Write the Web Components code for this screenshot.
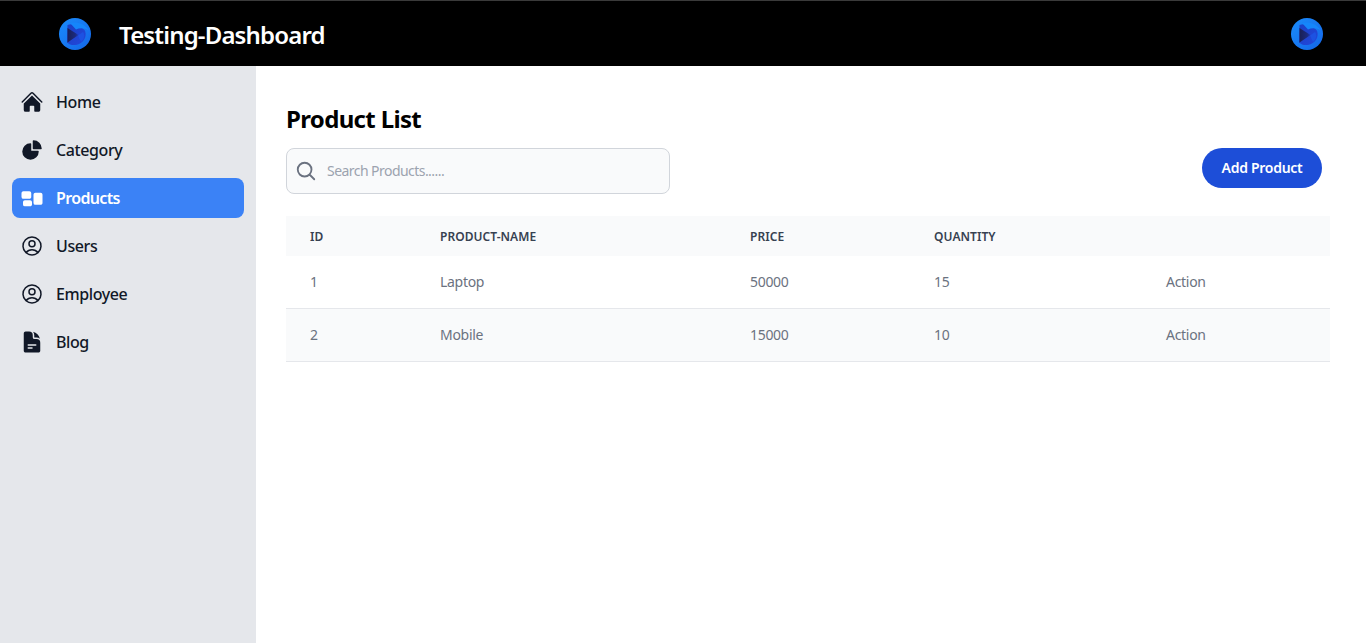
<!DOCTYPE html>
<html lang="en"><head><meta charset="utf-8"><title>Testing-Dashboard</title>
<style>
html,body{margin:0;height:100%;}
body{font-family:"Noto Sans","Open Sans","Liberation Sans",sans-serif;background:#fff;overflow:hidden;}
</style></head>
<body>
<dash-app>
  <app-header slot="header" title-text="Testing-Dashboard"></app-header>
  <side-nav slot="nav">
    <nav-item icon="home">Home</nav-item>
    <nav-item icon="pie">Category</nav-item>
    <nav-item icon="group" active>Products</nav-item>
    <nav-item icon="user">Users</nav-item>
    <nav-item icon="user">Employee</nav-item>
    <nav-item icon="doc">Blog</nav-item>
  </side-nav>
  <product-list></product-list>
</dash-app>
<script>
const LOGO_GRAD_IDS={n:0};
function logo(){
  const i=++LOGO_GRAD_IDS.n;
  return `<svg width="32" height="32" viewBox="0 0 32 32" aria-hidden="true">
  <defs>
   <linearGradient id="a${i}" x1="0" y1="0" x2="1" y2="1"><stop offset="0" stop-color="#1a8cfb"/><stop offset="1" stop-color="#1466e8"/></linearGradient>
   <linearGradient id="b${i}" x1="0" y1="0" x2="1" y2="1"><stop offset="0" stop-color="#1a3fc4"/><stop offset="1" stop-color="#2348dc"/></linearGradient>
   <linearGradient id="c${i}" x1="0" y1="0" x2="1" y2="0"><stop offset="0" stop-color="#1a2054"/><stop offset=".7" stop-color="#1c2a7c"/><stop offset="1" stop-color="#1e3cb8"/></linearGradient>
  </defs>
  <circle cx="16" cy="16" r="16" fill="url(#a${i})"/>
  <path d="M8.5 7C13 5.5 20 6.5 25.5 12 28 16 26.5 22.5 21 25.5 16.5 28 11 27.5 8 24.5Z" fill="url(#b${i})"/>
  <path d="M11 5C18 3 26 6 30 12.5 26 10 21 9.5 17 11.5Z" fill="#1586fb"/>
  <path d="M22 24C25.5 21 26 16.5 24 14L19 17.5Z" fill="#1d52e2"/>
  <path d="M8.5 10 19.5 17 8.5 24.5Z" fill="url(#c${i})"/>
  </svg>`;
}
const ICONS={
 home:`<svg viewBox="0 0 24 24" fill="currentColor"><path d="M11.47 3.841a.75.75 0 0 1 1.06 0l8.69 8.69a.75.75 0 1 0 1.06-1.061l-8.689-8.69a2.25 2.25 0 0 0-3.182 0l-8.69 8.69a.75.75 0 1 0 1.061 1.06l8.69-8.689Z"/><path d="m12 5.432 8.159 8.159c.03.03.06.058.091.086v6.198c0 1.035-.84 1.875-1.875 1.875H15a.75.75 0 0 1-.75-.75v-4.5a.75.75 0 0 0-.75-.75h-3a.75.75 0 0 0-.75.75V21a.75.75 0 0 1-.75.75H5.625a1.875 1.875 0 0 1-1.875-1.875v-6.198a2.29 2.29 0 0 0 .091-.086L12 5.432Z"/></svg>`,
 pie:`<svg viewBox="0 0 24 24" fill="currentColor"><path fill-rule="evenodd" d="M2.25 13.5a8.25 8.25 0 0 1 8.25-8.25.75.75 0 0 1 .75.75v6.75H18a.75.75 0 0 1 .75.75 8.25 8.25 0 0 1-16.5 0Z"/><path fill-rule="evenodd" d="M12.75 3a.75.75 0 0 1 .75-.75 8.25 8.25 0 0 1 8.25 8.25.75.75 0 0 1-.75.75h-7.5a.75.75 0 0 1-.75-.75V3Z"/></svg>`,
 group:`<svg viewBox="0 0 24 24" fill="currentColor"><path d="M1.5 7.125c0-1.036.84-1.875 1.875-1.875h6c1.036 0 1.875.84 1.875 1.875v3.75c0 1.036-.84 1.875-1.875 1.875h-6A1.875 1.875 0 0 1 1.5 10.875v-3.75Zm12 1.5c0-1.036.84-1.875 1.875-1.875h5.25c1.035 0 1.875.84 1.875 1.875v8.25c0 1.035-.84 1.875-1.875 1.875h-5.25a1.875 1.875 0 0 1-1.875-1.875v-8.25ZM3 16.125c0-1.036.84-1.875 1.875-1.875h5.25c1.036 0 1.875.84 1.875 1.875v2.25c0 1.035-.84 1.875-1.875 1.875h-5.25A1.875 1.875 0 0 1 3 18.375v-2.25Z"/></svg>`,
 user:`<svg viewBox="0 0 24 24" fill="none" stroke="currentColor" stroke-width="1.5" stroke-linecap="round" stroke-linejoin="round"><path d="M17.982 18.725A7.488 7.488 0 0 0 12 15.75a7.488 7.488 0 0 0-5.982 2.975m11.963 0a9 9 0 1 0-11.963 0m11.963 0A8.966 8.966 0 0 1 12 21a8.966 8.966 0 0 1-5.982-2.275M15 9.75a3 3 0 1 1-6 0 3 3 0 0 1 6 0Z"/></svg>`,
 doc:`<svg viewBox="0 0 24 24" fill="currentColor"><path fill-rule="evenodd" d="M5.625 1.5c-1.036 0-1.875.84-1.875 1.875v17.25c0 1.035.84 1.875 1.875 1.875h12.75c1.035 0 1.875-.84 1.875-1.875V12.75A3.75 3.75 0 0 0 16.5 9h-1.875a1.875 1.875 0 0 1-1.875-1.875V5.25A3.75 3.75 0 0 0 9 1.5H5.625ZM7.5 15a.75.75 0 0 1 .75-.75h7.5a.75.75 0 0 1 0 1.5h-7.5A.75.75 0 0 1 7.5 15Zm.75 2.25a.75.75 0 0 0 0 1.5H12a.75.75 0 0 0 0-1.5H8.25Z"/><path d="M12.971 1.816A5.23 5.23 0 0 1 14.25 5.25v1.875c0 .207.168.375.375.375H16.5a5.23 5.23 0 0 1 3.434 1.279 9.768 9.768 0 0 0-6.963-6.963Z"/></svg>`
};
function def(name,html,extra){
  const t=document.createElement('template');t.innerHTML=html;
  customElements.define(name,class extends HTMLElement{
    constructor(){super();this.attachShadow({mode:'open'}).appendChild(t.content.cloneNode(true));}
    connectedCallback(){extra&&extra.call(this);}
  });
}
def('dash-app',`<style>
:host{display:grid;grid-template-columns:256px 1fr;grid-template-rows:66px 1fr;height:100vh;width:100%}
::slotted([slot=header]){grid-column:1/3}
</style><slot name="header"></slot><slot name="nav"></slot><slot></slot>`);
def('app-header',`<style>
:host{display:flex;align-items:center;justify-content:space-between;box-sizing:border-box;background:#000;border-top:1px solid #3a3a3a;padding:0 43px 0 59px;height:66px;color:#fff}
.l{display:flex;align-items:center;gap:28px}
.t{font-size:24px;font-weight:600;letter-spacing:-.84px;line-height:32px;padding-top:2px}
svg{display:block}
</style><div class="l"><span class="lg"></span><span class="t"></span></div><span class="lg"></span>`,function(){
  this.shadowRoot.querySelectorAll('.lg').forEach(e=>e.innerHTML=logo());
  this.shadowRoot.querySelector('.t').textContent=this.getAttribute('title-text');
});
def('side-nav',`<style>
:host{display:flex;flex-direction:column;gap:8px;background:#e5e7eb;padding:16px 12px;box-sizing:border-box}
</style><slot></slot>`);
def('nav-item',`<style>
:host{display:flex;align-items:center;gap:12px;height:40px;padding:0 8px;border-radius:8px;color:#111827;font-size:16px;font-weight:500;letter-spacing:-.4px;box-sizing:border-box}
:host([active]){background:#3b82f6;color:#fff;font-weight:600;letter-spacing:-.65px}
.i{width:24px;height:24px;flex:none}
svg{display:block;width:24px;height:24px}
</style><span class="i"></span><span><slot></slot></span>`,function(){
  this.shadowRoot.querySelector('.i').innerHTML=ICONS[this.getAttribute('icon')];
});
def('product-row',`<style>
:host{display:grid;grid-template-columns:130px 310px 184px 232px 188px;align-items:center;height:53px;box-sizing:border-box;border-bottom:1px solid #e5e7eb;font-size:14px;color:#6b7280;letter-spacing:-.3px}
:host([alt]){background:#f9fafb}
:host([head]){height:40px;border:0;background:#f9fafb;font-size:12px;font-weight:600;color:#374151;text-transform:uppercase;letter-spacing:.05px}
::slotted(*){padding-left:24px}
:host(:not([head])) ::slotted(*){padding-bottom:2px}
</style><slot></slot>`);
def('search-box',`<style>
:host{display:flex;align-items:center;gap:10px;width:384px;height:46px;box-sizing:border-box;background:#f9fafb;border:1px solid #d1d5db;border-radius:8px;padding:0 8px}
svg{width:22px;height:22px;flex:none;color:#6b7280}
input{all:unset;flex:1;font:14px "Noto Sans","Open Sans",sans-serif;letter-spacing:-.55px;color:#111827;padding-bottom:2px}
input::placeholder{color:#9ca3af;opacity:1}
</style><svg viewBox="0 0 24 24" fill="none" stroke="currentColor" stroke-width="2" stroke-linecap="round" stroke-linejoin="round"><path d="m21 21-5.197-5.197m0 0A7.5 7.5 0 1 0 5.196 5.196a7.5 7.5 0 0 0 10.607 10.607Z"/></svg><input placeholder="Search Products......" aria-label="Search Products">`);
def('add-button',`<style>
:host{display:inline-flex;align-items:center;justify-content:center;box-sizing:border-box;padding-bottom:2px;width:120px;height:40px;background:#1d4ed8;color:#fff;border-radius:9999px;font-size:14px;font-weight:600;letter-spacing:-.28px;cursor:pointer}
</style><slot></slot>`);
def('product-list',`<style>
:host{display:block;padding:37px 36px 0 30px;min-width:0}
h1{margin:0 0 13px 0;font-size:24px;line-height:32px;font-weight:700;color:#000;letter-spacing:-.66px}
.bar{display:flex;justify-content:space-between;align-items:flex-start;padding-right:8px;margin-bottom:22px}
</style><h1>Product List</h1>
<div class="bar"><search-box></search-box><add-button>Add Product</add-button></div>
<div role="table">
<product-row head><span>ID</span><span>Product-Name</span><span>Price</span><span>Quantity</span><span></span></product-row>
<product-row><span>1</span><span>Laptop</span><span>50000</span><span>15</span><span>Action</span></product-row>
<product-row alt><span>2</span><span>Mobile</span><span>15000</span><span>10</span><span>Action</span></product-row>
</div>`);
</script>
</body></html>
